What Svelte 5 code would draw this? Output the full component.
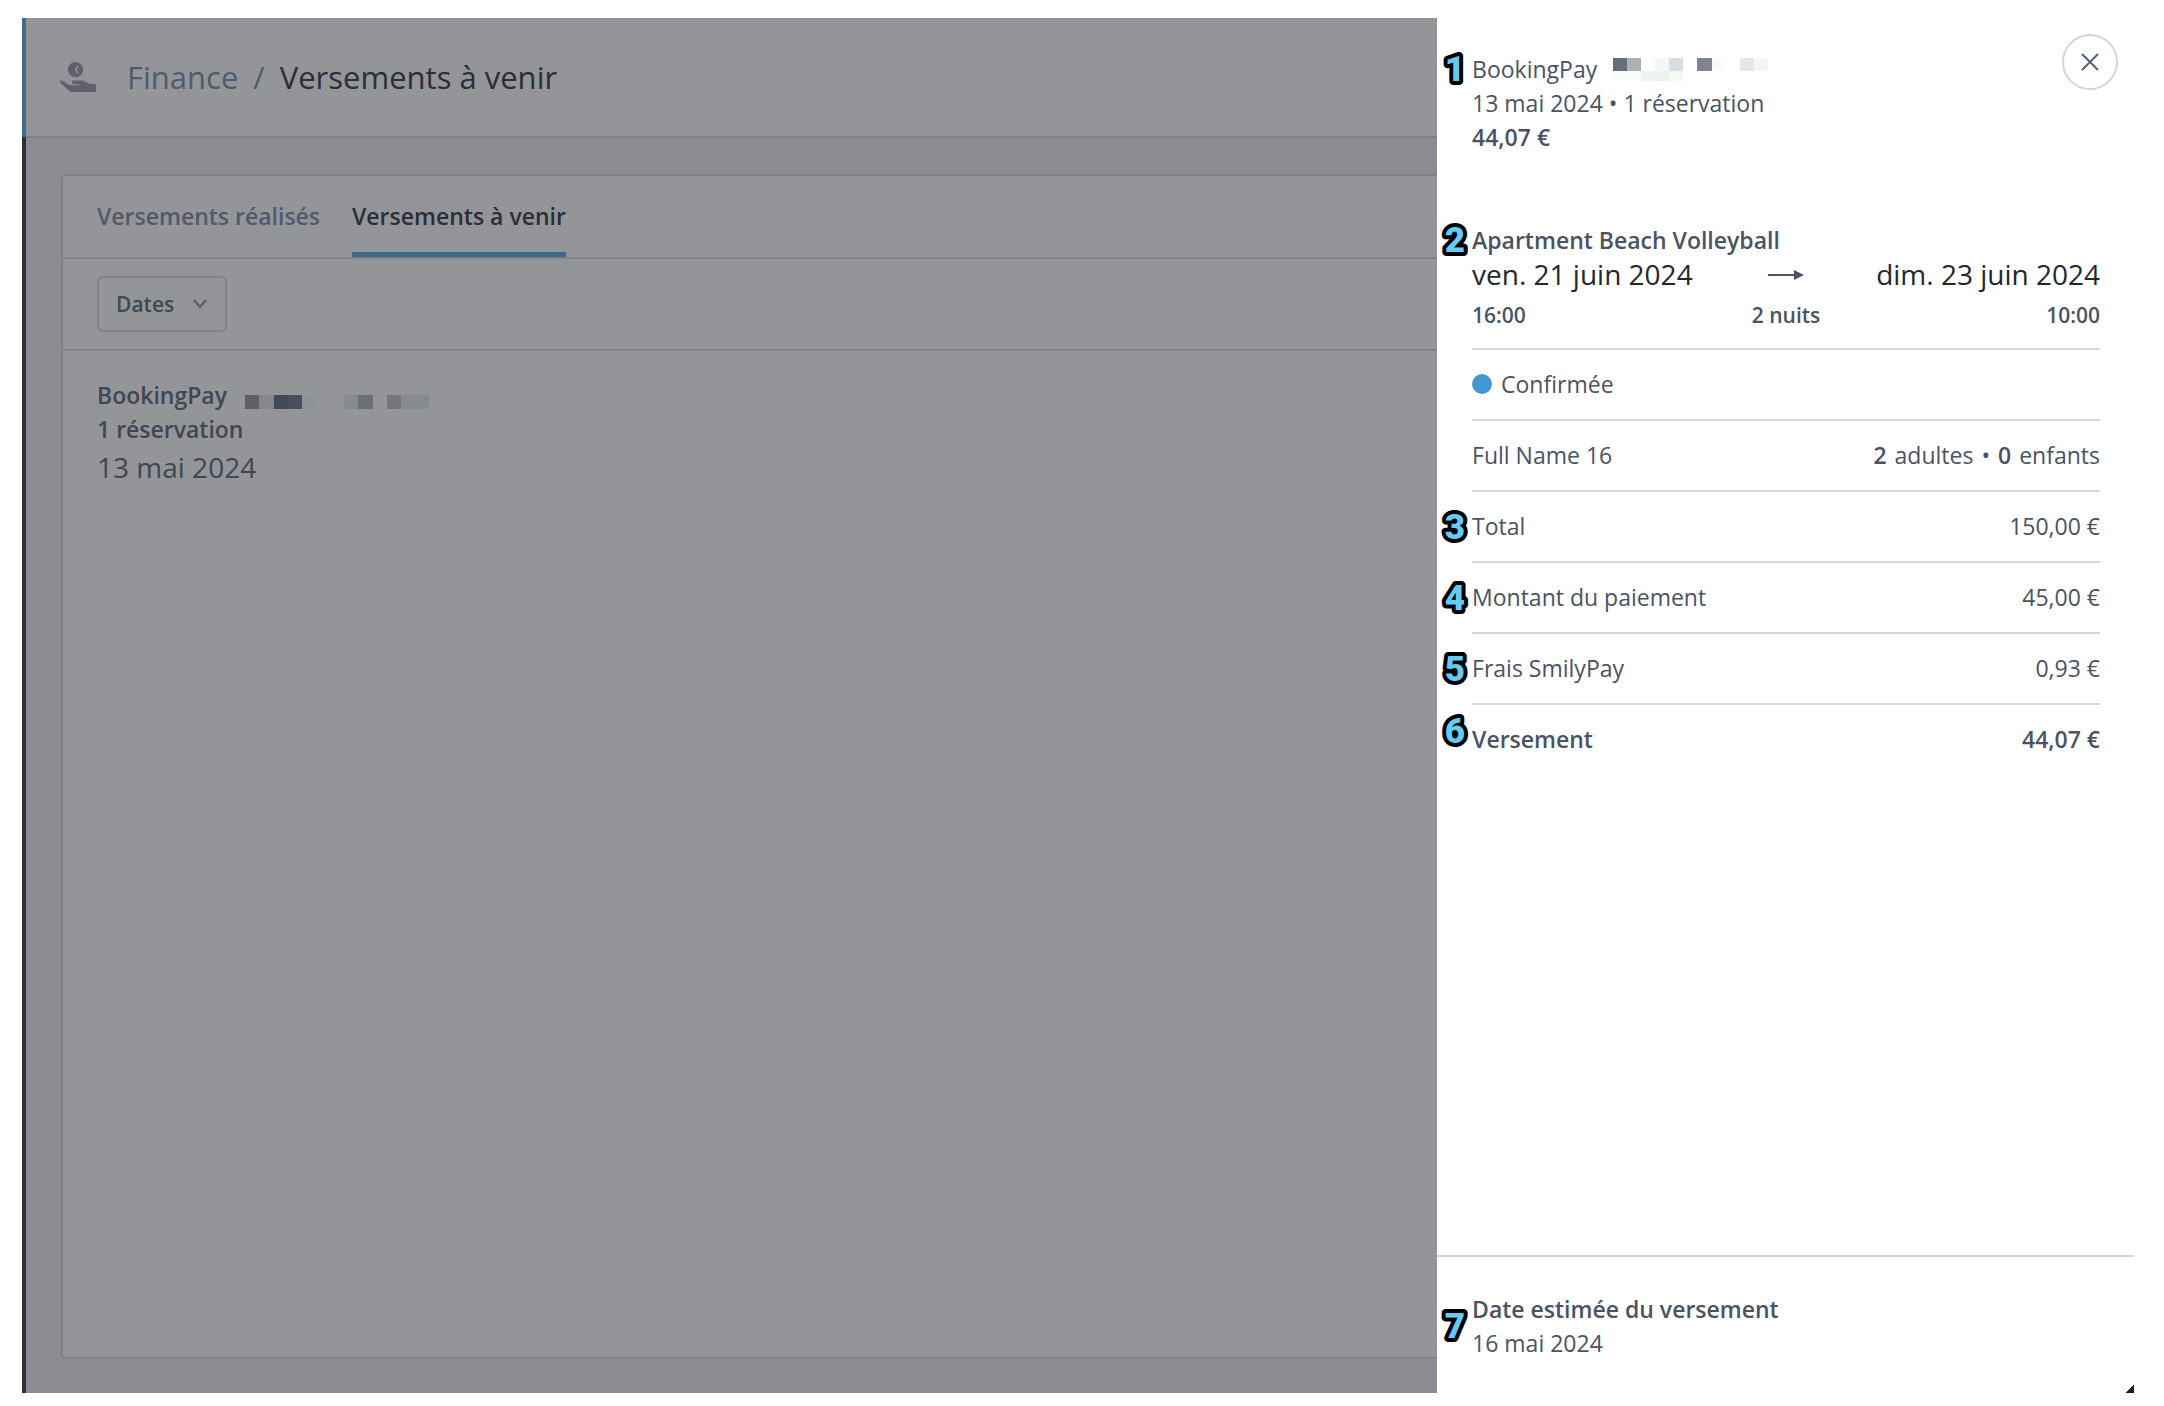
<script lang="ts">
  type Block = [x: number, y: number, width: number, fill: string];

  const listMask: Block[] = [
    [0, 0, 14, '#5e6064'],
    [14, 0, 15, '#84878c'],
    [29, 0, 14, '#434857'],
    [43, 0, 14, '#4b4f5b'],
    [57, 0, 14, '#8c9297'],
    [99, 0, 14, '#868b8e'],
    [113, 0, 15, '#6b7074'],
    [142, 0, 14, '#73777b'],
    [156, 0, 14, '#888c92'],
    [170, 0, 14, '#868b90'],
  ];

  const drawerMask: Block[] = [
    [0, 0, 14, '#656e7a'],
    [14, 0, 14, '#adb1b3'],
    [42, 0, 14, '#f3f7f7'],
    [56, 0, 14, '#d8dfe2'],
    [84, 0, 15, '#7f8290'],
    [99, 0, 14, '#f8fbfc'],
    [127, 0, 14, '#e3e7e9'],
    [141, 0, 14, '#f4f6f6'],
    [0, 13, 28, '#fafcfb'],
    [28, 13, 14, '#eff3f0'],
    [42, 13, 14, '#edf3ec'],
    [56, 13, 14, '#f6f8f6'],
  ];

  const amounts = [
    { step: 3, label: 'Total', value: '150,00 €' },
    { step: 4, label: 'Montant du paiement', value: '45,00 €' },
    { step: 5, label: 'Frais SmilyPay', value: '0,93 €' },
    { step: 6, label: 'Versement', value: '44,07 €', strong: true },
  ];

  let drawerOpen = $state(true);
</script>

{#snippet mask(blocks: Block[], width: number, height: number, rowHeight: number)}
  <svg class="mask" {width} {height} aria-hidden="true" shape-rendering="crispEdges">
    {#each blocks as [x, y, w, fill]}
      <rect {x} {y} width={w} height={rowHeight} {fill} />
    {/each}
  </svg>
{/snippet}

{#snippet pin(step: number)}
  <svg class="pin" width="40" height="40" viewBox="0 0 40 40">
    <text x="33" y="32">{step}</text>
  </svg>
{/snippet}

<div class="screen">
  <div class="app">
    <div class="rail"></div>
    <main class="page">
      <header class="page-header">
        <svg class="finance-icon" width="36" height="30" viewBox="0 0 36 30" aria-hidden="true">
          <circle cx="15.5" cy="7.7" r="7.6" />
          <path class="coin-mark" d="M18.5 4.5 Q13 7.7 18.5 11" />
          <path d="M0 18.5 L2.5 18.5 L9 23 L19.5 23.5 L19.5 22.5 L12 22 L12 18.5 L23 18.5 L28.5 21.5 L36 22 L36 30 L10.5 30 L0 20.5 Z" />
        </svg>
        <h1 class="breadcrumb">
          <a href="#finance">Finance</a>
          <span class="slash">/</span>
          <span>Versements à venir</span>
        </h1>
      </header>

      <section class="card">
        <nav class="tabs">
          <a href="#realises">Versements réalisés</a>
          <a class="active" href="#a-venir" aria-current="page">Versements à venir</a>
        </nav>
        <div class="filters">
          <button type="button" class="filter-button">
            Dates
            <svg width="16" height="12" viewBox="0 0 16 12" aria-hidden="true">
              <path d="M2 2 L8 9 L14 2" />
            </svg>
          </button>
        </div>
        <div class="payout">
          <p class="with-mask">BookingPay {@render mask(listMask, 184, 14, 14)}</p>
          <p>1 réservation</p>
          <p class="payout-date">13 mai 2024</p>
        </div>
      </section>
    </main>

    {#if drawerOpen}
      <aside class="drawer">
        <div class="drawer-header">
          <div class="summary">
            <p class="pinned with-mask">
              {@render pin(1)}BookingPay {@render mask(drawerMask, 155, 23, 13)}
            </p>
            <p>13 mai 2024 • 1 réservation</p>
            <p class="strong">44,07 €</p>
          </div>
          <button
            type="button"
            class="close-button"
            aria-label="Fermer"
            onclick={() => (drawerOpen = false)}
          >
            <svg width="18" height="18" viewBox="0 0 18 18" aria-hidden="true">
              <path d="M1 1 L17 17 M17 1 L1 17" />
            </svg>
          </button>
        </div>

        <div class="drawer-body">
          <h2 class="pinned">{@render pin(2)}Apartment Beach Volleyball</h2>
          <div class="stay">
            <span>ven. 21 juin 2024</span>
            <svg width="36" height="14" viewBox="0 0 36 14" aria-hidden="true">
              <path class="shaft" d="M0 8 H28" />
              <path class="head" d="M26 3 L36 8 L26 13 Z" />
            </svg>
            <span>dim. 23 juin 2024</span>
          </div>
          <div class="stay-times">
            <span>16:00</span>
            <span>2 nuits</span>
            <span>10:00</span>
          </div>

          <p class="row status"><span class="dot"></span>Confirmée</p>
          <div class="row">
            <span>Full Name 16</span>
            <span class="guests"><b>2</b> <span>adultes</span> <span>•</span> <b>0</b> <span>enfants</span></span>
          </div>
          <dl>
            {#each amounts as { step, label, value, strong }}
              <div class="row pinned" class:strong>
                <dt>{@render pin(step)}{label}</dt>
                <dd>{value}</dd>
              </div>
            {/each}
          </dl>
        </div>

        <footer class="drawer-footer">
          <div class="pinned">
            {@render pin(7)}
            <p class="strong">Date estimée du versement</p>
            <p>16 mai 2024</p>
          </div>
        </footer>
        <span class="corner"></span>
      </aside>
    {/if}
  </div>
</div>

<style>
  :global(body) {
    background: #fff;
  }

  .screen {
    box-sizing: border-box;
    min-height: 100vh;
    display: flex;
    padding: 18px 30px 13px 22px;
    font-family: 'Open Sans', 'Noto Sans', sans-serif;
    font-size: 23px;
    line-height: 34px;
    color: #4a5364;
  }

  .app {
    flex: 1;
    display: flex;
    min-width: 0;
    background: #8b8c91;
  }

  p,
  h1,
  h2,
  dl,
  dd {
    margin: 0;
    font-size: inherit;
    font-weight: inherit;
  }

  a {
    color: inherit;
    text-decoration: none;
  }

  button {
    font: inherit;
    color: inherit;
    cursor: pointer;
  }

  .rail {
    flex: 0 0 4px;
    background: linear-gradient(#41698a 119px, #2e2f35 119px);
  }

  .page {
    flex: 1;
    display: flex;
    flex-direction: column;
    min-width: 0;
  }

  .page-header {
    display: flex;
    align-items: center;
    gap: 31px;
    height: 118px;
    padding-left: 34px;
    background: #949599;
    border-bottom: 2px solid #7f8085;
  }

  .finance-icon {
    fill: #5f626d;
  }

  .coin-mark {
    fill: none;
    stroke: #8b8d93;
    stroke-width: 2;
  }

  .breadcrumb {
    display: flex;
    gap: 15px;
    font-size: 31px;
    color: #2b2e38;
  }

  .breadcrumb a,
  .slash {
    color: #525a6d;
  }

  .card {
    flex: 1;
    margin: 36px 0 34px 35px;
    background: #949598;
    border: 2px solid #818286;
    border-right: 0;
    border-radius: 5px 0 0 5px;
  }

  .tabs {
    display: flex;
    gap: 32px;
    padding-left: 34px;
    font-weight: 600;
    color: #51596c;
    border-bottom: 2px solid #818286;
  }

  .tabs a {
    padding: 23px 0 19px;
    border-bottom: 5px solid transparent;
  }

  .tabs .active {
    color: #2b2e38;
    border-color: #3e698a;
  }

  .filters {
    padding: 17px 34px;
    border-bottom: 2px solid #818286;
  }

  .filter-button {
    display: flex;
    align-items: center;
    gap: 18px;
    height: 56px;
    padding: 0 17px;
    font-size: 21px;
    font-weight: 600;
    color: #404755;
    background: none;
    border: 2px solid #7f8489;
    border-radius: 6px;
  }

  .filter-button svg {
    fill: none;
    stroke: #555b66;
    stroke-width: 2;
  }

  .payout {
    padding: 27px 34px;
    font-weight: 600;
    color: #404653;
  }

  .payout-date {
    font-size: 28px;
    font-weight: 400;
    line-height: 42px;
  }

  .with-mask {
    display: flex;
    align-items: center;
    gap: 18px;
  }

  .payout .mask {
    margin-top: 14px;
  }

  .drawer {
    position: relative;
    flex: 0 0 33%;
    display: flex;
    flex-direction: column;
    background: #fff;
  }

  .drawer-header {
    display: flex;
    justify-content: space-between;
    padding: 16px 16px 0 35px;
  }

  .summary {
    padding-top: 18px;
  }

  .summary .with-mask {
    gap: 16px;
  }

  .close-button {
    display: grid;
    place-items: center;
    width: 56px;
    height: 56px;
    padding: 0;
    background: #fff;
    border: 2px solid #d3d5d9;
    border-radius: 50%;
  }

  .close-button svg {
    fill: none;
    stroke: #56607a;
    stroke-width: 2;
  }

  .drawer-body {
    flex: 1;
    padding: 69px 34px 0 35px;
  }

  .strong,
  h2 {
    font-weight: 600;
  }

  .stay,
  .stay-times {
    display: grid;
    grid-template-columns: 1fr auto 1fr;
    align-items: center;
  }

  .stay > :last-child,
  .stay-times > :last-child {
    text-align: right;
  }

  .stay {
    font-size: 28px;
    color: #24272e;
  }

  .stay .shaft {
    stroke: #4a5364;
    stroke-width: 2;
  }

  .stay .head {
    fill: #4a5364;
  }

  .stay-times {
    padding: 7px 0 16px;
    font-size: 21px;
    font-weight: 600;
  }

  .row {
    display: flex;
    justify-content: space-between;
    padding: 17px 0 18px;
    border-top: 2px solid #d5d8db;
  }

  .status {
    justify-content: flex-start;
    align-items: center;
    gap: 9px;
  }

  .dot {
    width: 20px;
    height: 20px;
    background: #4398d4;
    border-radius: 50%;
  }

  .guests {
    display: flex;
    gap: 8px;
  }

  .guests b {
    font-weight: 600;
  }

  .drawer-footer {
    padding: 35px 34px 33px 35px;
    border-top: 2px solid #d5d6da;
  }

  .pinned {
    position: relative;
  }

  .pin {
    position: absolute;
    top: 50%;
    right: 100%;
    transform: translateY(-50%);
    overflow: visible;
  }

  .pin text {
    font-family: Roboto, sans-serif;
    font-size: 35px;
    font-weight: 900;
    text-anchor: end;
    fill: #63cbf5;
    stroke: #000;
    stroke-width: 8px;
    stroke-linejoin: round;
    paint-order: stroke;
  }

  .row.strong .pin {
    top: 26px;
  }

  .corner {
    position: absolute;
    right: 0;
    bottom: 0;
    width: 8px;
    height: 8px;
    background: linear-gradient(135deg, transparent 50%, #1d1d1f 50%);
  }
</style>
